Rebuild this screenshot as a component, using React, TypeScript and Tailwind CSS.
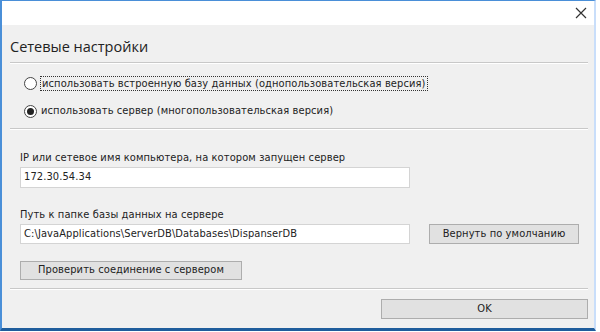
export default function App() {
  const f = { fontFamily: '"DejaVu Sans Condensed", "DejaVu Sans", Verdana, sans-serif' };
  return (
    <div className="w-[600px] h-[332px] bg-white relative overflow-hidden" style={f}>
      <div className="absolute left-0 top-0 w-[596px] h-[331px] border-l-2 border-t border-r-2 border-b-[3px] border-l-[#4a8fd8] border-t-[#4a8fd8] border-r-[#c9defa] border-b-[#1f5d9c] flex flex-col">
        <div className="h-[24px] bg-white flex items-center justify-end pr-[6px] shrink-0">
          <svg width="12" height="12" viewBox="0 0 12 12" className="mr-[1px]">
            <path d="M1 1 L11 11 M11 1 L1 11" stroke="#333" strokeWidth="1.2" />
          </svg>
        </div>
        <div className="flex-1 bg-[#f0f0f0] flex flex-col pl-[8px] pr-[6px]">
          <div className="pt-[13px] h-[37px] text-[14.5px] text-[#222] leading-[18px]" style={{ fontFamily: '"Open Sans", sans-serif' }}>
            Сетевые настройки
          </div>
          <div className="h-[2px] border-t border-[#c8c8c8] border-b border-b-white" />
          <div className="flex flex-col pl-[14px] text-[11px] text-[#222] tracking-[0.1px]">
            <div className="flex items-center h-[14px] mt-[12px]">
              <span className="w-[13px] h-[13px] rounded-full border border-[#444] bg-white mr-[3px]" />
              <span className="border border-dotted border-[#333] px-[1px] leading-[13px]">использовать встроенную базу данных (однопользовательская версия)</span>
            </div>
            <div className="flex items-center h-[14px] mt-[14px]">
              <span className="w-[13px] h-[13px] rounded-full border border-[#444] bg-white mr-[4px] flex items-center justify-center">
                <span className="w-[7px] h-[7px] rounded-full bg-[#222]" />
              </span>
              <span>использовать сервер (многопользовательская версия)</span>
            </div>
          </div>
          <div className="h-[2px] border-t border-[#c8c8c8] border-b border-b-white mt-[10px]" />
          <div className="flex flex-col pl-[10px] text-[11px] text-[#222] tracking-[0.1px]">
            <div className="mt-[21px] leading-[14px]">IP или сетевое имя компьютера, на котором запущен сервер</div>
            <div className="mt-[2px] w-[390px] h-[21px] bg-white border border-[#d4d4d4] flex items-center pl-[3px]">172.30.54.34</div>
            <div className="mt-[20px] leading-[14px]">Путь к папке базы данных на сервере</div>
            <div className="mt-[2px] flex items-center">
              <div className="w-[390px] h-[20px] bg-white border border-[#d4d4d4] flex items-center pl-[3px]">C:\JavaApplications\ServerDB\Databases\DispanserDB</div>
              <button className="ml-[19px] w-[150px] h-[20px] bg-[#e1e1e1] border border-[#adadad] text-[11px] text-[#222]">Вернуть по умолчанию</button>
            </div>
            <button className="mt-[17px] w-[222px] h-[19px] bg-[#e1e1e1] border border-[#adadad] text-[11px] text-[#222]">Проверить соединение с сервером</button>
          </div>
          <div className="h-[2px] border-t border-[#c8c8c8] border-b border-b-white mt-[8px]" />
          <div className="flex justify-end pr-0 mt-[9px]">
            <button className="w-[207px] h-[20px] bg-[#e1e1e1] border border-[#adadad] text-[11px] text-[#222]">OK</button>
          </div>
        </div>
      </div>
    </div>
  );
}
